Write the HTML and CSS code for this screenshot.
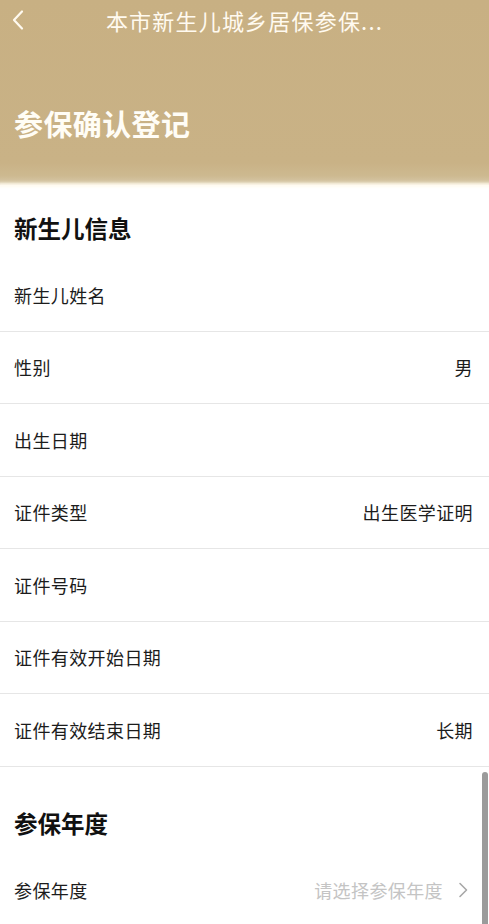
FILE: index.html
```html
<!DOCTYPE html>
<html lang="zh-CN">
<head>
<meta charset="utf-8">
<title>参保确认登记</title>
<link rel="stylesheet" href="styles.css">
</head>
<body>
<div class="page">
  <header class="header">
    <div class="nav">
      <span class="nav-back">
        <svg width="14" height="22" viewBox="0 0 14 22"><path d="M11 2.5 L3 11 L11 19.5" fill="none" stroke="#fffaf0" stroke-width="2.2" stroke-linecap="round" stroke-linejoin="round"/></svg>
      </span>
      <span class="nav-title">本市新生儿城乡居保参保...</span>
      <span></span>
    </div>
    <h1 class="hero-title">参保确认登记</h1>
  </header>
  <div class="header-glow"></div>

  <section class="section">
    <h2 class="section-title">新生儿信息</h2>
    <div class="row"><span class="label">新生儿姓名</span><span class="value"></span></div>
    <div class="row"><span class="label">性别</span><span class="value">男</span></div>
    <div class="row"><span class="label">出生日期</span><span class="value"></span></div>
    <div class="row"><span class="label">证件类型</span><span class="value">出生医学证明</span></div>
    <div class="row"><span class="label">证件号码</span><span class="value"></span></div>
    <div class="row"><span class="label">证件有效开始日期</span><span class="value"></span></div>
    <div class="row"><span class="label">证件有效结束日期</span><span class="value">长期</span></div>
  </section>

  <section class="section section-second">
    <h2 class="section-title">参保年度</h2>
    <div class="row row-last"><span class="label">参保年度</span>
      <span class="value placeholder">请选择参保年度
        <svg class="chev" width="16" height="16" viewBox="0 0 16 16"><path d="M3 1.5 L9.5 8 L3 14.5" fill="none" stroke="#a8a8a8" stroke-width="1.6" stroke-linecap="round" stroke-linejoin="round"/></svg>
      </span>
    </div>
  </section>
  <div class="scrollbar"></div>
</div>
</body>
</html>
```

FILE: styles.css
```css
* { box-sizing: border-box; }
html, body { margin: 0; padding: 0; background: #fff; }
body {
  font-family: "Noto Sans CJK SC", "Noto Sans", sans-serif;
  color: #1a1a1a;
  width: 489px;
  overflow: hidden;
}
.page { position: relative; min-height: 924px; }

.header {
  height: 185px;
  background: linear-gradient(180deg, #c8b083 0%, #c9b286 88%, #cdb990 95%, #d9cbad 100%);
}
.header-glow {
  height: 0;
  box-shadow: 0 0 3px 2px #fffbef;
}
.nav {
  height: 40px;
  display: grid;
  grid-template-columns: 1fr auto 1fr;
  align-items: center;
}
.nav-back { display: flex; align-items: center; padding-left: 11px; }
.nav-back svg { display: block; }
.nav-title {
  color: #fffaf0;
  font-size: 22px;
  line-height: 40px;
  letter-spacing: 1.2px;
}
.hero-title {
  margin: 63px 0 0 0;
  padding-left: 14px;
  color: #fffdf6;
  font-size: 29px;
  font-weight: 700;
  line-height: 40px;
  letter-spacing: 0.4px;
}

.section-title {
  margin: 0;
  padding: 26px 14px 14px;
  font-size: 23.5px;
  font-weight: 700;
  line-height: 34px;
  color: #111;
}
.section-second { margin-top: 13px; }

.row {
  height: 72.5px;
  display: flex;
  align-items: center;
  justify-content: space-between;
  padding: 0 16px 0 14px;
  border-bottom: 1px solid #e6e6e6;
  font-size: 18px;
  letter-spacing: 0.4px;
}
.row-last { border-bottom: none; }
.label { color: #1c1c1c; }
.value { color: #1c1c1c; display: flex; align-items: center; }
.placeholder { color: #c4c4c4; }
.chev { display: block; margin-left: 14px; }

.scrollbar {
  position: absolute;
  right: 1px;
  top: 772px;
  width: 6px;
  height: 160px;
  background: #9b9b9b;
  border-radius: 3px 3px 0 0;
}
```
